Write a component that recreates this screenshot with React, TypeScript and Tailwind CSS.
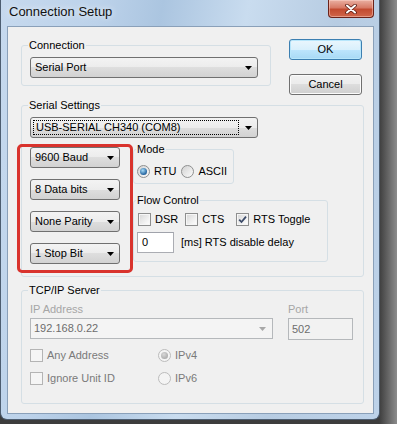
import React from "react";

const font = "[font-family:'Liberation_Sans',Arial,sans-serif]";

function Arrow({ color = "#000" }: { color?: string }) {
  return (
    <svg width="7" height="4" viewBox="0 0 7 4" className="shrink-0">
      <path d="M0 0h7L3.5 4z" fill={color} />
    </svg>
  );
}

function Dropdown({ text, className = "" }: { text: string; className?: string }) {
  return (
    <div
      className={`flex items-center h-[21px] border border-[#707070] rounded-[3px] bg-[linear-gradient(#f3f3f3,#ececec_50%,#dedede_50%,#d2d2d2)] pl-[4px] pr-[5px] ${className}`}
    >
      <span className="flex-1 leading-[13px] whitespace-nowrap">{text}</span>
      <Arrow />
    </div>
  );
}

function CheckBox({ checked = false, disabled = false }: { checked?: boolean; disabled?: boolean }) {
  return (
    <span
      className={`relative flex w-[13px] h-[13px] shrink-0 border ${
        disabled
          ? "border-[#b4b4b4] bg-[#f5f5f5]"
          : "border-[#8e8f8f] bg-[linear-gradient(135deg,#d6d6d6,#f4f4f4_70%,#ffffff)] shadow-[inset_0_0_0_1px_#f6f6f6]"
      }`}
    >
      {checked && (
        <svg width="11" height="11" viewBox="0 0 11 11" className="absolute left-0 top-0">
          <path d="M2.2 5.6l2.3 2.4L9 2.6" fill="none" stroke="#3b4a68" strokeWidth="1.8" />
        </svg>
      )}
    </span>
  );
}

function Radio({ checked = false, disabled = false }: { checked?: boolean; disabled?: boolean }) {
  return (
    <span
      className={`flex items-center justify-center w-[13px] h-[13px] rounded-full border shrink-0 ${
        disabled
          ? "border-[#bcbcbc] bg-[#f4f4f4]"
          : "border-[#8e8f8f] bg-[linear-gradient(135deg,#d2d2d2,#fbfbfb)]"
      }`}
    >
      {checked && (
        <span
          className={`w-[7px] h-[7px] rounded-full ${
            disabled
              ? "bg-[radial-gradient(circle_at_40%_35%,#d8d8d8,#9c9c9c)]"
              : "bg-[radial-gradient(circle_at_40%_35%,#a8dcf8,#2a6aa4_65%,#123f6e)]"
          }`}
        />
      )}
    </span>
  );
}

export default function App() {
  return (
    <div
      className={`w-[397px] h-[424px] overflow-hidden bg-[linear-gradient(to_right,#3d3d3d_95.5%,#8c8c8c)] text-[11px] text-black ${font}`}
    >
      <div className="w-[380px] h-[420px] flex flex-col border border-t-0 border-[#4d5d70] rounded-b-[7px] bg-[linear-gradient(100deg,#c6d9ee_0%,#bcd2ea_22%,#abc5e0_36%,#c9dcef_55%,#b7cce2_75%,#bdd2e9_100%)]">
        {/* title bar */}
        <div className="flex items-start h-[26px] shrink-0">
          <span className="pl-[8px] pt-[4px] text-[13px] leading-[16px] text-[#111] [text-shadow:0_0_6px_rgba(255,255,255,0.95)]">
            Connection Setup
          </span>
          <div className="ml-auto mr-[5px] w-[46px] h-[18px] flex items-center justify-center rounded-b-[4px] border border-t-0 border-[#6b2219] bg-[linear-gradient(#eab0a2,#d77a66_45%,#c24a30_55%,#d0664a)] shadow-[inset_0_0_0_1px_rgba(255,220,210,0.45)]">
            <svg width="12" height="10" viewBox="0 0 12 10">
              <path d="M2 1.5l8 7M10 1.5l-8 7" stroke="#5a1a10" strokeWidth="3.6" strokeLinecap="round" />
              <path d="M2 1.5l8 7M10 1.5l-8 7" stroke="#ffffff" strokeWidth="2" strokeLinecap="round" />
            </svg>
          </div>
        </div>

        {/* client area */}
        <div className="ml-[6px] w-[367px] h-[388px] shrink-0 border border-[#8aa0b9] bg-[#f0f0f0] pl-[13px] pt-[12px]">
          <div className="flex items-start">
            <fieldset className="w-[250px] border border-[#d5dfe5] rounded-[3px] px-[8px] pb-[7px]">
              <legend className="-ml-[2px] px-[1px] leading-[13px]">Connection</legend>
              <Dropdown text="Serial Port" className="mt-[5px] w-[228px]" />
            </fieldset>
            <div className="ml-[18px] flex flex-col">
              <button className="w-[73px] h-[21px] rounded-[3px] border border-[#3c7fb1] bg-[linear-gradient(#eaf6fd,#d9f0fc_50%,#bee6fd_50%,#a7d9f5)] shadow-[inset_0_0_0_1px_#b7e6fb] leading-[13px]">
                OK
              </button>
              <button className="mt-[14px] w-[73px] h-[21px] rounded-[3px] border border-[#707070] bg-[linear-gradient(#f2f2f2,#ebebeb_50%,#dddddd_50%,#cfcfcf)] shadow-[inset_0_0_0_1px_#fbfbfb] leading-[13px]">
                Cancel
              </button>
            </div>
          </div>

          <fieldset className="mt-[4px] w-[343px] border border-[#d5dfe5] rounded-[3px] px-[8px] pb-[12px]">
            <legend className="-ml-[2px] px-[1px] leading-[13px]">Serial Settings</legend>
            <div className="mt-[5px] w-[228px] h-[21px] flex items-center border border-[#707070] rounded-[3px] bg-[linear-gradient(#f3f3f3,#ececec_50%,#dedede_50%,#d2d2d2)] pl-[2px] pr-[5px]">
              <span className="w-[206px] h-[15px] flex items-center border border-dotted border-black px-[2px] leading-[13px] whitespace-nowrap">
                USB-SERIAL CH340 (COM8)
              </span>
              <span className="ml-auto">
                <Arrow />
              </span>
            </div>

            <div className="relative mt-[5px] flex items-start">
              <div className="mt-[4px] w-[90px] flex flex-col gap-[11px]">
                <Dropdown text="9600 Baud" />
                <Dropdown text="8 Data bits" />
                <Dropdown text="None Parity" />
                <Dropdown text="1 Stop Bit" />
              </div>

              <div className="ml-[13px] flex flex-col">
                <fieldset className="w-[101px] border border-[#d5dfe5] rounded-[3px] px-[3px] pb-[5px]">
                  <legend className="-ml-[1px] px-[1px] leading-[13px]">Mode</legend>
                  <div className="mt-[9px] flex items-center h-[13px]">
                    <Radio checked />
                    <span className="ml-[4px] leading-[13px]">RTU</span>
                    <span className="ml-[5px]">
                      <Radio />
                    </span>
                    <span className="ml-[4px] leading-[13px]">ASCII</span>
                  </div>
                </fieldset>

                <fieldset className="mt-[10px] w-[195px] border border-[#d5dfe5] rounded-[3px] px-[3px] pb-[8px]">
                  <legend className="-ml-[1px] px-[1px] leading-[13px]">Flow Control</legend>
                  <div className="mt-[6px] ml-[1px] flex items-center h-[13px]">
                    <CheckBox />
                    <span className="ml-[4px] leading-[13px]">DSR</span>
                    <span className="ml-[7px]">
                      <CheckBox />
                    </span>
                    <span className="ml-[4px] leading-[13px]">CTS</span>
                    <span className="ml-[12px]">
                      <CheckBox checked />
                    </span>
                    <span className="ml-[4px] leading-[13px]">RTS Toggle</span>
                  </div>
                  <div className="mt-[6px] flex items-center">
                    <div className="w-[37px] h-[21px] flex items-center border border-[#abadb3] border-t-[#a0a3ab] bg-white pl-[4px] leading-[13px]">
                      0
                    </div>
                    <span className="ml-[7px] leading-[13px]">[ms] RTS disable delay</span>
                  </div>
                </fieldset>
              </div>

              <div className="pointer-events-none absolute -left-[13px] top-[1px] w-[116px] h-[129px] border-[3px] border-[#d9332d] rounded-[5px]" />
            </div>
          </fieldset>

          <fieldset className="mt-[7px] w-[343px] border border-[#d5dfe5] rounded-[3px] px-[8px] pb-[18px]">
            <legend className="-ml-[2px] px-[1px] leading-[13px]">TCP/IP Server</legend>
            <div className="mt-[6px] flex items-start">
              <div className="flex flex-col">
                <span className="leading-[13px] text-[#a6a6a6]">IP Address</span>
                <div className="mt-[2px] w-[243px] h-[21px] flex items-center border border-[#b5b8bb] bg-[#f4f4f4] pl-[3px] pr-[6px]">
                  <span className="flex-1 leading-[13px] text-[#6d6d6d]">192.168.0.22</span>
                  <Arrow color="#a8a8a8" />
                </div>
              </div>
              <div className="ml-[15px] flex flex-col">
                <span className="leading-[13px] text-[#a6a6a6]">Port</span>
                <div className="mt-[2px] w-[65px] h-[22px] flex items-center border border-[#b5b8bb] bg-[#f2f2f2] pl-[3px] leading-[13px] text-[#6d6d6d]">
                  502
                </div>
              </div>
            </div>

            <div className="mt-[9px] grid grid-cols-[128px_1fr] gap-y-[10px] text-[#7a7a7a]">
              <div className="flex items-center h-[13px]">
                <CheckBox disabled />
                <span className="ml-[4px] leading-[13px]">Any Address</span>
              </div>
              <div className="flex items-center h-[13px]">
                <Radio checked disabled />
                <span className="ml-[4px] leading-[13px]">IPv4</span>
              </div>
              <div className="flex items-center h-[13px]">
                <CheckBox disabled />
                <span className="ml-[4px] leading-[13px]">Ignore Unit ID</span>
              </div>
              <div className="flex items-center h-[13px]">
                <Radio disabled />
                <span className="ml-[4px] leading-[13px]">IPv6</span>
              </div>
            </div>
          </fieldset>
        </div>
      </div>
    </div>
  );
}
